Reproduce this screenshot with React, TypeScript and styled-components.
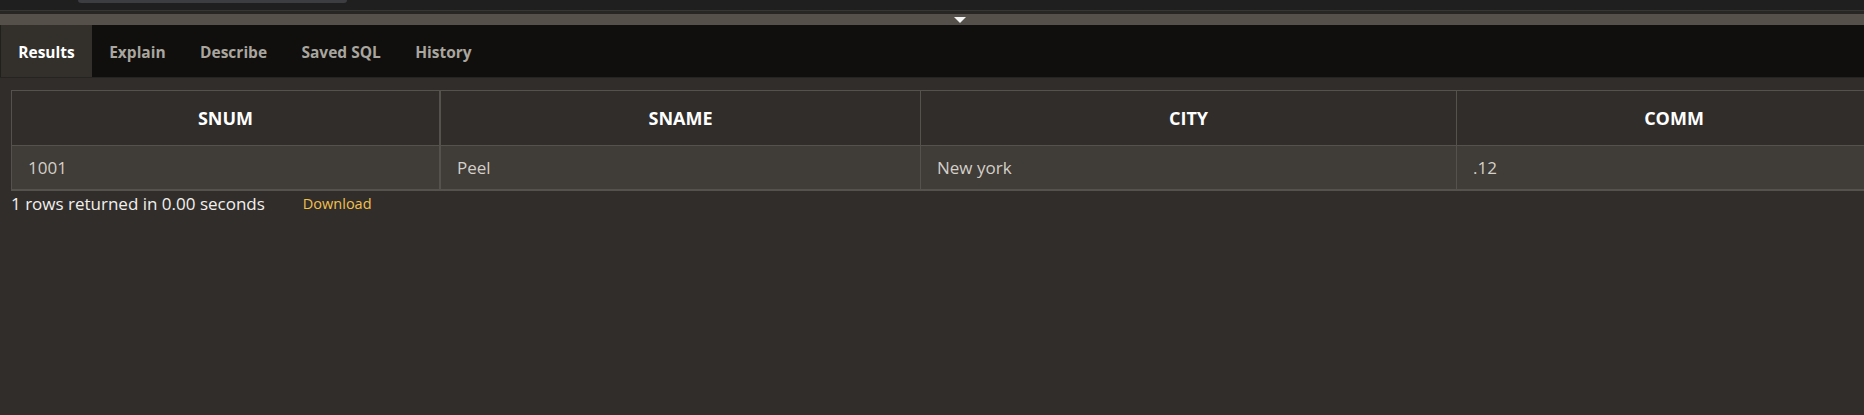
import React from "react";
import styled, { createGlobalStyle } from "styled-components";

const Global = createGlobalStyle`
  html, body { margin: 0; padding: 0; }
  body {
    background: #312d2a;
    font-family: "Open Sans", "Noto Sans", "Liberation Sans", sans-serif;
    overflow: hidden;
  }
  #root { width: 1864px; height: 415px; overflow: hidden; }
`;

const Page = styled.div`
  display: flex;
  flex-direction: column;
  width: 1864px;
  height: 415px;
  background: #312d2a;
`;

const TopStrip = styled.div`
  height: 10px;
  background: #1f1f1f;
  border-bottom: 1px solid #383633;
  display: flex;
  align-items: flex-start;
`;

const EditorField = styled.div`
  margin-left: 78px;
  width: 269px;
  height: 3px;
  background: #3b3d41;
  border-radius: 0 0 4px 4px;
`;

const Gutter = styled.div`
  height: 3px;
  background: #282624;
`;

const Splitter = styled.div`
  position: relative;
  height: 11px;
  background: #55514a;
`;

const SplitHandle = styled.div`
  position: absolute;
  left: 954px;
  top: 3px;
  width: 0;
  height: 0;
  border-left: 6px solid transparent;
  border-right: 6px solid transparent;
  border-top: 6px solid #f4f4f4;
`;

const TabBar = styled.div`
  display: flex;
  height: 52px;
  background: #100f0d;
  border-bottom: 1px solid #262422;
`;

const Tab = styled.div<{ $active?: boolean }>`
  display: flex;
  align-items: center;
  justify-content: center;
  padding: 2px ${(p) => (p.$active ? "16px" : "17.2px")} 0;
  font-size: 15.5px;
  font-weight: 700;
  color: ${(p) => (p.$active ? "#ffffff" : "#a9a59f")};
  background: ${(p) => (p.$active ? "#33302c" : "transparent")};
  border-left: ${(p) => (p.$active ? "1px solid #22201d" : "none")};
  width: ${(p) => (p.$active ? "92px" : "auto")};
  box-sizing: border-box;
`;

const Content = styled.div`
  padding: 12px 0 0 11px;
  display: flex;
  flex-direction: column;
`;

const Grid = styled.table`
  border-collapse: collapse;
  table-layout: fixed;
  width: 1875px;
`;

const HeadCell = styled.th<{ $w: number; $thick?: boolean }>`
  width: ${(p) => p.$w}px;
  height: 54px;
  padding: 0;
  background: #312d2a;
  border-top: 1px solid #55514c;
  border-bottom: 1px solid #55514c;
  border-left: 1px solid #55514c;
  border-right: ${(p) => (p.$thick ? "2px" : "1px")} solid #55514c;
  color: #ffffff;
  font-size: 18px;
  font-weight: 700;
  text-align: center;
`;

const DataCell = styled.td<{ $thick?: boolean }>`
  height: 43px;
  padding: 0 0 0 16px;
  background: #403c37;
  border-bottom: 2px solid #55514c;
  border-left: 1px solid #55514c;
  border-right: ${(p) => (p.$thick ? "2px" : "1px")} solid #55514c;
  color: #d3cfc9;
  font-size: 17px;
  font-weight: 400;
  text-align: left;
`;

const Footer = styled.div`
  display: flex;
  align-items: center;
  height: 25px;
  gap: 38px;
`;

const RowCount = styled.span`
  font-size: 17px;
  color: #f2f0ed;
`;

const DownloadLink = styled.a`
  font-size: 14.5px;
  color: #f2c14e;
  text-decoration: none;
  cursor: pointer;
`;

const columns = [
  { name: "SNUM", w: 427 },
  { name: "SNAME", w: 479 },
  { name: "CITY", w: 535 },
  { name: "COMM", w: 434 },
];

const rows = [["1001", "Peel", "New york", ".12"]];

const tabs = ["Results", "Explain", "Describe", "Saved SQL", "History"];

export default function App() {
  return (
    <>
      <Global />
      <Page>
        <TopStrip>
          <EditorField />
        </TopStrip>
        <Gutter />
        <Splitter>
          <SplitHandle />
        </Splitter>
        <TabBar>
          {tabs.map((t, i) => (
            <Tab key={t} $active={i === 0}>
              {t}
            </Tab>
          ))}
        </TabBar>
        <Content>
          <Grid>
            <thead>
              <tr>
                {columns.map((c, i) => (
                  <HeadCell key={c.name} $w={c.w} $thick={i === 0}>
                    {c.name}
                  </HeadCell>
                ))}
              </tr>
            </thead>
            <tbody>
              {rows.map((r, ri) => (
                <tr key={ri}>
                  {r.map((v, ci) => (
                    <DataCell key={ci} $thick={ci === 0}>
                      {v}
                    </DataCell>
                  ))}
                </tr>
              ))}
            </tbody>
          </Grid>
          <Footer>
            <RowCount>1 rows returned in 0.00 seconds</RowCount>
            <DownloadLink>Download</DownloadLink>
          </Footer>
        </Content>
      </Page>
    </>
  );
}
